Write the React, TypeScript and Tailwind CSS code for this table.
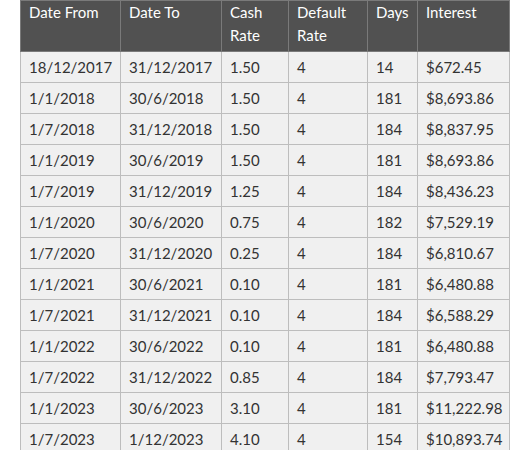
import React from "react";

const rows = [
  ["18/12/2017", "31/12/2017", "1.50", "4", "14", "$672.45"],
  ["1/1/2018", "30/6/2018", "1.50", "4", "181", "$8,693.86"],
  ["1/7/2018", "31/12/2018", "1.50", "4", "184", "$8,837.95"],
  ["1/1/2019", "30/6/2019", "1.50", "4", "181", "$8,693.86"],
  ["1/7/2019", "31/12/2019", "1.25", "4", "184", "$8,436.23"],
  ["1/1/2020", "30/6/2020", "0.75", "4", "182", "$7,529.19"],
  ["1/7/2020", "31/12/2020", "0.25", "4", "184", "$6,810.67"],
  ["1/1/2021", "30/6/2021", "0.10", "4", "181", "$6,480.88"],
  ["1/7/2021", "31/12/2021", "0.10", "4", "184", "$6,588.29"],
  ["1/1/2022", "30/6/2022", "0.10", "4", "181", "$6,480.88"],
  ["1/7/2022", "31/12/2022", "0.85", "4", "184", "$7,793.47"],
  ["1/1/2023", "30/6/2023", "3.10", "4", "181", "$11,222.98"],
  ["1/7/2023", "1/12/2023", "4.10", "4", "154", "$10,893.74"],
];

const widths = ["w-[100px]", "w-[101px]", "w-[67px]", "w-[79px]", "w-[50px]", "w-[92px]"];

export default function App() {
  return (
    <div className="h-[450px] w-[512px] overflow-hidden bg-white pl-[20px] font-['Lato',sans-serif]">
      <table className="w-[490px] table-fixed border-collapse text-[15px]">
        <colgroup>
          {widths.map((w, i) => (
            <col key={i} className={w} />
          ))}
        </colgroup>
        <thead>
          <tr className="bg-[#515151] text-white">
            {[
              ["Date From"],
              ["Date To"],
              ["Cash", "Rate"],
              ["Default", "Rate"],
              ["Days"],
              ["Interest"],
            ].map((h, i) => (
              <th
                key={i}
                className="h-[51px] border border-[#7a7a7a] px-[8px] pt-0 text-left align-top font-normal leading-[23px]"
              >
                {h.map((line, j) => (
                  <div key={j}>{line}</div>
                ))}
              </th>
            ))}
          </tr>
        </thead>
        <tbody>
          {rows.map((r, i) => (
            <tr key={i} className="bg-[#f0f0f0] text-[#333]">
              {r.map((c, j) => (
                <td
                  key={j}
                  className="h-[31px] border border-[#bdbdbd] px-[8px] align-middle leading-[20px] whitespace-nowrap"
                >
                  {c}
                </td>
              ))}
            </tr>
          ))}
        </tbody>
      </table>
    </div>
  );
}
